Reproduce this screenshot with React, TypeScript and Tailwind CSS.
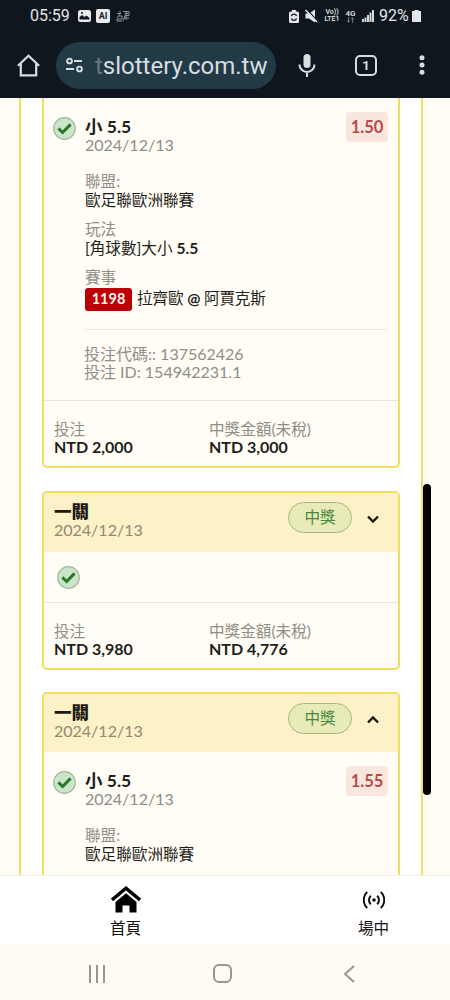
import type { ReactNode } from 'react';
import clsx from 'clsx';

const Check = () => (
  <svg className="h-[23px] w-[23px] shrink-0" viewBox="0 0 23 23" fill="none">
    <circle cx="11.5" cy="11.5" r="10.8" fill="#cbe5c8" stroke="#9fb79b" strokeWidth="1.2" />
    <path d="M5.4 11.4l4.2 4.1 8-8.1" stroke="#27772b" strokeWidth="3" />
  </svg>
);

const Chevron = ({ up }: { up?: boolean }) => (
  <svg className="h-3 w-3" viewBox="0 0 12 12" fill="none" stroke="#1c1a10" strokeWidth="2.4">
    {up ? <path d="M1 8.5l5-5 5 5" /> : <path d="M1 3.5l5 5 5-5" />}
  </svg>
);

const Card = ({ className, children }: { className: string; children: ReactNode }) => (
  <div className={clsx('overflow-hidden border-2 border-[#f0df5e] bg-[#fffdf5]', className)}>
    {children}
  </div>
);

const CardHeader = ({ up }: { up?: boolean }) => (
  <div className={clsx('flex justify-between bg-[#fef1c8] pl-[10px] pr-[19px]', up ? 'h-[58px]' : 'h-[59px]')}>
    <div className="pt-[9px] leading-[19px]">
      <div className="text-[17.5px] font-black text-[#1c1a10]">一關</div>
      <div className="text-base leading-[18px] text-[#918a74]">2024/12/13</div>
    </div>
    <div className="flex items-start pt-[9px]">
      <span className="flex h-[31px] w-[64px] items-center justify-center rounded-full border border-[#a3b681] bg-[#e8eab9] text-[#46893f]">
        中獎
      </span>
      <span className="ml-[15px] mt-[11px]">
        <Chevron up={up} />
      </span>
    </div>
  </div>
);

const Pick = ({ odds }: { odds: string }) => (
  <div className="flex pl-[9px] pr-[10px] pt-[19px]">
    <Check />
    <div className="ml-[9px] h-[38px] flex-1 leading-[19px]">
      <div className="text-[17.5px] font-bold text-[#1f1e1a]">小 5.5</div>
      <div className="text-base leading-[18px] text-[#8f8e88]">2024/12/13</div>
    </div>
    <span className="-mt-[5px] flex h-[30px] w-[42px] items-center justify-center rounded bg-[#f8e6df] text-[16.5px] font-bold text-[#b94a48]">
      {odds}
    </span>
  </div>
);

const Field = ({ label, children }: { label: string; children: ReactNode }) => (
  <div className="mb-[10px] leading-[19px]">
    <div className="text-[#8f8e88]">{label}</div>
    <div className="text-[#1f1e1a]">{children}</div>
  </div>
);

const Total = ({ label, value }: { label: string; value: string }) => (
  <div>
    <div className="leading-[18px] text-[#8f8e88]">{label}</div>
    <div className="text-base leading-[17px] font-bold text-[#1f1e1a]">{value}</div>
  </div>
);

const Totals = ({ stake, payout }: { stake: string; payout: string }) => (
  <div className="grid h-[66px] grid-cols-[155px_1fr] content-start border-t border-[#e9e6dc] pl-[10px] pt-[19px]">
    <Total label="投注" value={stake} />
    <Total label="中獎金額(未稅)" value={payout} />
  </div>
);

const StatusBar = () => (
  <div className="flex h-8 items-center pl-[30px] pr-[29px] text-[16px] text-[#e3e6e9]">
    <span className="w-[48px] whitespace-nowrap leading-none">05:59</span>
    <svg className="h-3 w-[13px]" viewBox="0 0 13 12">
      <rect width="13" height="12" rx="2.5" fill="#e8eaec" />
      <path d="M1.5 9.5V7l2.5-2 2.5 2 2-1.5 3 2.5v1.5z" fill="#10171e" />
      <circle cx="4" cy="3" r="1" fill="#10171e" />
    </svg>
    <span className="ml-[5px] flex h-[14px] w-[14px] items-center justify-center rounded-[2px] bg-[#e8eaec] text-[9px] font-bold leading-none text-[#1b222a]">
      AI
    </span>
    <svg className="ml-[6px] h-3 w-[14px]" viewBox="0 0 14 12" fill="none" stroke="#8b9298">
      <path d="M1 3.5h4M4 1v3L1 8M2 6h4v3H1v2h5M7 1.5h6v4H9L7 11M9 3.5h3M10 1v9M8 8h5" />
    </svg>
    <div className="ml-auto flex items-center">
      <svg className="h-[13px] w-[10px]" viewBox="0 0 10 13">
        <path d="M3 0h4v1.5h1.5Q10 1.5 10 3v8.5Q10 13 8.5 13h-7Q0 13 0 11.5V3Q0 1.5 1.5 1.5H3z" fill="#e3e6e9" />
        <path d="M2.5 6a2.6 2.6 0 0 1 5 0M7.5 8.5a2.6 2.6 0 0 1-5 0" fill="none" stroke="#10171e" strokeWidth="1.3" />
      </svg>
      <svg className="ml-[6px] h-[14px] w-[13px]" viewBox="0 0 13 14">
        <path d="M.5 4.5H4l6-4v13l-6-4H.5z" fill="#e3e6e9" />
        <path d="M1.5 0l11 12" stroke="#10171e" strokeWidth="1.2" />
        <path d="M.5 1L12 13" stroke="#e3e6e9" strokeWidth="1.5" />
      </svg>
      <span className="ml-[6px] w-[16px] text-center text-[7px] font-medium leading-[7px]">
        <span className="block">Vo))</span>
        <span className="block">LTE1</span>
      </span>
      <span className="ml-[5px] flex w-[11px] flex-col items-center text-[8px] font-medium leading-[7px]">
        4G
        <svg className="h-[6px] w-[9px]" viewBox="0 0 9 6" fill="none" stroke="#6d757c">
          <path d="M2.5 0v5M1 3.5l1.5 2L4 3.5M6.5 6V1M5 2.5l1.5-2L8 2.5" />
        </svg>
      </span>
      <svg className="ml-[6px] h-3 w-3" viewBox="0 0 12 12" fill="#d5d9dc">
        <path d="M0 9h2v3H0zM2.5 7.5h2V12h-2zM5 5h2v7H5zM7.5 2.5h2V12h-2zM10 0h2v12h-2z" />
      </svg>
      <span className="ml-[5px] w-[33px] whitespace-nowrap leading-none">92%</span>
      <svg className="h-3 w-[9px]" viewBox="0 0 9 12" fill="#e3e6e9">
        <path d="M2.5 0h4v1H9V12H0V1h2.5z" />
      </svg>
    </div>
  </div>
);

const AddressBar = () => (
  <div className="flex h-[66px] items-center pl-[17px] text-[#d8dde0]">
    <svg className="h-[23px] w-[23px]" viewBox="0 0 23 23" fill="none" stroke="#d8dde0" strokeWidth="2.2">
      <path d="M.9 11.8L11.5 1.8l10.6 10M3.8 9.5v11.9h15.4V9.5" />
    </svg>
    <div className="ml-4 flex h-[47px] w-[220px] items-center rounded-full bg-[#223a45] pl-[9px]">
      <svg className="h-4 w-[20px]" viewBox="0 0 20 16" fill="none" stroke="#d8dde0" strokeWidth="1.9">
        <circle cx="4.5" cy="4" r="2.4" />
        <path d="M9 4h8M1 12h8" />
        <circle cx="14.5" cy="12" r="2.4" />
      </svg>
      <span className="ml-[10px] whitespace-nowrap pt-[2px] text-[24px] leading-none">
        <span className="text-[#66777f]">t</span>slottery.com.tw
      </span>
    </div>
    <svg className="ml-[22px] h-[23px] w-[18px]" viewBox="0 0 18 23" fill="none" stroke="#d8dde0" strokeWidth="2">
      <rect x="5.5" y="0" width="7" height="14" rx="3.5" fill="#d8dde0" stroke="none" />
      <path d="M1.5 10.5a7.5 7.5 0 0 0 15 0M9 18v5" />
    </svg>
    <div className="ml-[39px] flex h-[21px] w-[22px] items-center justify-center rounded-[5px] border-2 border-[#d8dde0] text-[13px] font-bold leading-none">
      1
    </div>
    <svg className="ml-[42px] h-5 w-[6px]" viewBox="0 0 6 20" fill="#d8dde0">
      <circle cx="3" cy="2.7" r="2.5" />
      <circle cx="3" cy="10" r="2.5" />
      <circle cx="3" cy="17.3" r="2.5" />
    </svg>
  </div>
);

const TabBar = () => (
  <div className="flex h-[69px] border-t border-[#efeeea] bg-white text-[#111]">
    <div className="flex w-[251px] flex-col items-center pt-[10px]">
      <svg className="h-[27px] w-[30px]" viewBox="0 0 30 27">
        <path d="M1 14L15 2.3 29 14" fill="none" stroke="#000" strokeWidth="3.4" />
        <path d="M15 7.3L25.5 16v10.5h-7v-7h-7v7h-7V16z" fill="#000" />
      </svg>
      <span className="mt-[6px] leading-[19px]">首頁</span>
    </div>
    <div className="flex flex-1 flex-col items-center pl-[46px] pt-[10px]">
      <svg className="h-[27px] w-[22px]" viewBox="0 0 22 27" fill="none" stroke="#111" strokeWidth="2">
        <circle cx="11" cy="14" r="1.8" fill="#111" stroke="none" />
        <path d="M7.8 9.7a6 6 0 0 0 0 8.6M14.2 9.7a6 6 0 0 1 0 8.6M4.2 6a11 11 0 0 0 0 16M17.8 6a11 11 0 0 1 0 16" />
      </svg>
      <span className="mt-[6px] leading-[19px]">場中</span>
    </div>
  </div>
);

const SystemNav = () => (
  <div className="flex h-14 items-center bg-[#fffcf4] pl-[88px] pt-[3px]">
    <svg className="h-[18px] w-[18px]" viewBox="0 0 18 18" stroke="#99968f" strokeWidth="2">
      <path d="M2 0v18M9 0v18M16 0v18" />
    </svg>
    <div className="ml-[107px] h-[19px] w-[19px] rounded-[6px] border-2 border-[#99968f]" />
    <svg className="ml-[111px] h-[18px] w-[12px]" viewBox="0 0 12 18" fill="none" stroke="#99968f" strokeWidth="2">
      <path d="M11 1L2 9l9 8" />
    </svg>
  </div>
);

export default function App() {
  return (
    <div className="flex h-[1000px] w-[450px] flex-col overflow-hidden bg-[#fffdf5] font-['Lato','Noto_Sans_CJK_TC',sans-serif] text-[15.6px]">
      <header className="h-[98px] shrink-0 bg-[#0f161e] font-['Roboto',sans-serif]">
        <StatusBar />
        <AddressBar />
      </header>

      <main className="relative h-[777px] shrink-0 overflow-hidden">
        <div className="ml-[19px] h-full w-[404px] border-x-2 border-[#f0df5e] bg-white px-[21px]">
          <Card className="rounded-b-[5px] border-t-0">
            <Pick odds="1.50" />
            <div className="pl-[41px] pr-[12px] pt-[17px]">
              <Field label="聯盟:">歐足聯歐洲聯賽</Field>
              <Field label="玩法">
                [角球數]大小 <b>5.5</b>
              </Field>
              <div className="leading-[19px] text-[#8f8e88]">賽事</div>
              <div className="flex h-[24px] items-center text-[#1f1e1a]">
                <span className="mr-[5px] flex h-[23px] w-[47px] items-center justify-center rounded-[3px] bg-[#ba0206] text-[14.5px] font-bold text-[#fff4ec]">
                  1198
                </span>
                <span className="tracking-[-0.01em]">
                  拉齊歐 <b>@</b> 阿賈克斯
                </span>
              </div>
              <div className="mt-[18px] border-t border-[#e9e6dc] pb-[19px] pt-[15px] text-base leading-[18px] text-[#8f8e88]">
                <div className="-ml-[1px]">投注代碼:: 137562426</div>
                <div className="-ml-[1px]">投注 ID: 154942231.1</div>
              </div>
            </div>
            <Totals stake="NTD 2,000" payout="NTD 3,000" />
          </Card>

          <Card className="mt-[23px] rounded-[5px]">
            <CardHeader />
            <div className="flex h-[50px] items-center pl-[13px]">
              <Check />
            </div>
            <Totals stake="NTD 3,980" payout="NTD 4,776" />
          </Card>

          <Card className="mt-[22px] rounded-[5px]">
            <CardHeader up />
            <Pick odds="1.55" />
            <div className="pb-10 pl-[41px] pt-[17px]">
              <Field label="聯盟:">歐足聯歐洲聯賽</Field>
            </div>
          </Card>
        </div>
        {/* scrollbar thumb */}
        <div className="absolute left-[423px] top-[386px] h-[311px] w-[8px] rounded-full bg-black" />
      </main>

      <TabBar />
      <SystemNav />
    </div>
  );
}
